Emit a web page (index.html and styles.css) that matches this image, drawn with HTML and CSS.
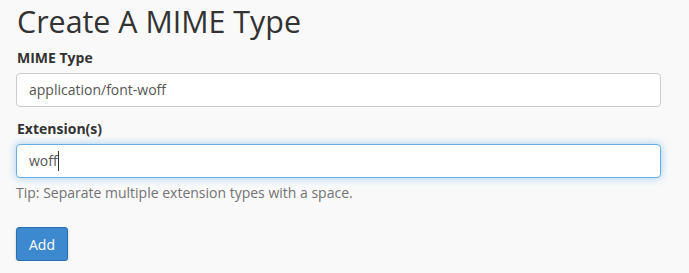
FILE: index.html
```html
<!DOCTYPE html>
<html>
<head>
<meta charset="utf-8">
<link rel="stylesheet" href="styles.css">
</head>
<body>
<div class="page">
  <h1 class="title">Create A MIME Type</h1>
  <div class="group">
    <label class="label">MIME Type</label>
    <div class="input">application/font-woff</div>
  </div>
  <div class="group">
    <label class="label">Extension(s)</label>
    <div class="input focus">woff<span class="caret"></span></div>
    <div class="help">Tip: Separate multiple extension types with a space.</div>
  </div>
  <div class="actions">
    <button class="btn">Add</button>
  </div>
</div>
</body>
</html>
```
FILE: styles.css
```css
html, body {
  margin: 0;
  padding: 0;
  background: #f9f9f9;
}
body {
  font-family: "Open Sans", "Liberation Sans", sans-serif;
  color: #333;
  font-size: 14px;
}
.page {
  padding: 0 28px 0 16px;
}
.title {
  margin: 0;
  padding-left: 1px;
  font-size: 30.4px;
  font-weight: 400;
  line-height: 44px;
  color: #333;
}
.group {
  margin-top: 4px;
}
.group + .group {
  margin-top: 12px;
}
.label {
  display: block;
  font-weight: 700;
  font-size: 14px;
  line-height: 20px;
  margin-bottom: 5px;
  padding-left: 1px;
}
.input {
  height: 34px;
  box-sizing: border-box;
  border: 1px solid #ccc;
  border-radius: 4px;
  background: #fff;
  padding: 0 12px;
  line-height: 32px;
  color: #555;
  font-size: 14px;
}
.input.focus {
  border-color: #66afe9;
  box-shadow: 0 0 8px rgba(102, 175, 233, 0.6);
}
.caret {
  display: inline-block;
  width: 1px;
  height: 20px;
  background: #333;
  vertical-align: -5px;
}
.help {
  margin-top: 5px;
  color: #737373;
  line-height: 20px;
}
.actions {
  margin-top: 24px;
}
.btn {
  font-family: inherit;
  font-size: 14px;
  color: #fff;
  background: #3d89d0;
  border: 1px solid #2d6fae;
  border-radius: 3px;
  width: 52px;
  height: 34px;
  padding: 0;
  box-shadow: 0 2px 3px rgba(0,0,0,0.2);
}
```
